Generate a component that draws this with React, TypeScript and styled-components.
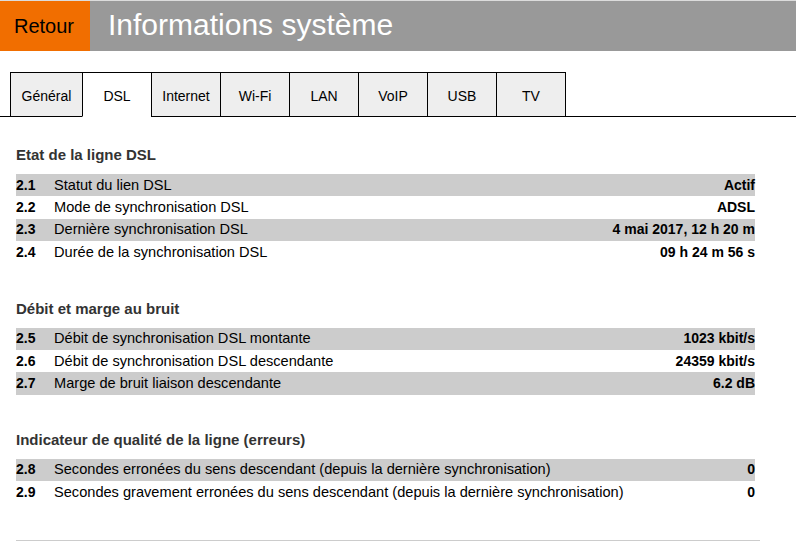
import * as React from 'react'
import styled, { createGlobalStyle } from 'styled-components'

const GlobalStyle = createGlobalStyle`
  body {
    margin: 0;
    background: #fff;
    font-family: "Liberation Sans", Arial, sans-serif;
    color: #000;
  }
`

type Row = { id: string; label: string; value: string }
type Section = { title: string; rows: Row[] }

const TABS = ['Général', 'DSL', 'Internet', 'Wi-Fi', 'LAN', 'VoIP', 'USB', 'TV']

const SECTIONS: Section[] = [
  {
    title: 'Etat de la ligne DSL',
    rows: [
      { id: '2.1', label: 'Statut du lien DSL', value: 'Actif' },
      { id: '2.2', label: 'Mode de synchronisation DSL', value: 'ADSL' },
      { id: '2.3', label: 'Dernière synchronisation DSL', value: '4 mai 2017, 12 h 20 m' },
      { id: '2.4', label: 'Durée de la synchronisation DSL', value: '09 h 24 m 56 s' }
    ]
  },
  {
    title: 'Débit et marge au bruit',
    rows: [
      { id: '2.5', label: 'Débit de synchronisation DSL montante', value: '1023 kbit/s' },
      { id: '2.6', label: 'Débit de synchronisation DSL descendante', value: '24359 kbit/s' },
      { id: '2.7', label: 'Marge de bruit liaison descendante', value: '6.2 dB' }
    ]
  },
  {
    title: 'Indicateur de qualité de la ligne (erreurs)',
    rows: [
      {
        id: '2.8',
        label: 'Secondes erronées du sens descendant (depuis la dernière synchronisation)',
        value: '0'
      },
      {
        id: '2.9',
        label: 'Secondes gravement erronées du sens descendant (depuis la dernière synchronisation)',
        value: '0'
      }
    ]
  }
]

export default function App() {
  const [active, setActive] = React.useState('DSL')

  return (
    <>
      <GlobalStyle />
      <Header>
        <BackButton href="#">Retour</BackButton>
        <PageTitle>Informations système</PageTitle>
      </Header>

      <TabBar>
        <TabGap />
        {TABS.map(t => (
          <Tab key={t} $active={t === active} onClick={() => setActive(t)}>
            {t}
          </Tab>
        ))}
        <TabFill />
      </TabBar>

      <Content>
        {SECTIONS.map(s => (
          <Block key={s.title}>
            <BlockTitle>{s.title}</BlockTitle>
            <Rows>
              {s.rows.map((r, i) => (
                <InfoRow key={r.id} $shaded={i % 2 === 0}>
                  <RowId>{r.id}</RowId>
                  <RowLabel>{r.label}</RowLabel>
                  <RowValue>{r.value}</RowValue>
                </InfoRow>
              ))}
            </Rows>
          </Block>
        ))}
        <Rule />
      </Content>
    </>
  )
}

const Header = styled.header`
  display: flex;
  height: 50px;
  border-top: 1px solid #dcdcdc;
  background: #999;
`

const BackButton = styled.a`
  display: flex;
  align-items: center;
  width: 90px;
  padding: 0 0 0 14px;
  box-sizing: border-box;
  background: #f16e00;
  color: #000;
  font-size: 20px;
  text-decoration: none;
`

const PageTitle = styled.h1`
  margin: 0;
  padding: 0 0 3px 18px;
  display: flex;
  align-items: center;
  color: #fff;
  font-size: 30px;
  font-weight: normal;
`

const TabBar = styled.nav`
  display: flex;
  margin-top: 21px;
  height: 45px;
`

const TabGap = styled.div`
  width: 10px;
  border-bottom: 1px solid #000;
`

const TabFill = styled.div`
  flex: 1;
  border-bottom: 1px solid #000;
`

// tabs share one width, the first one is a little wider
const Tab = styled.a<{ $active: boolean }>`
  box-sizing: border-box;
  flex: 0 0 69px;
  padding-top: 2px;
  display: flex;
  align-items: center;
  justify-content: center;
  border-top: 1px solid #000;
  border-left: 1px solid #000;
  border-bottom: 1px solid ${p => (p.$active ? 'transparent' : '#000')};
  background: ${p => (p.$active ? '#fff' : '#eee')};
  color: #000;
  font-size: 14px;
  white-space: nowrap;
  cursor: pointer;

  &:first-of-type {
    flex-basis: 72px;
  }

  &:last-of-type {
    flex-basis: 70px;
    border-right: 1px solid #000;
  }
`

const Content = styled.main`
  padding: 29px 0 0 16px;
`

const Block = styled.section`
  width: 739px;
  margin-bottom: 36px;
`

const BlockTitle = styled.h2`
  margin: 0 0 10px;
  font-size: 15px;
  line-height: 18px;
  font-weight: bold;
  color: #333;
`

const Rows = styled.div`
  display: flex;
  flex-direction: column;
`

const InfoRow = styled.div<{ $shaded: boolean }>`
  display: grid;
  grid-template-columns: 38px 1fr auto;
  height: 22.4px;
  align-items: center;
  padding-bottom: 1px;
  box-sizing: border-box;
  background: ${p => (p.$shaded ? '#ccc' : 'transparent')};
  font-size: 14px;
`

const RowId = styled.span`
  font-weight: bold;
`

const RowLabel = styled.span`
  white-space: nowrap;
  font-size: 14.6px;
`

const RowValue = styled.span`
  font-weight: bold;
  text-align: right;
`

const Rule = styled.hr`
  width: 744px;
  margin: 0;
  border: 0;
  border-top: 1px solid #ccc;
`
